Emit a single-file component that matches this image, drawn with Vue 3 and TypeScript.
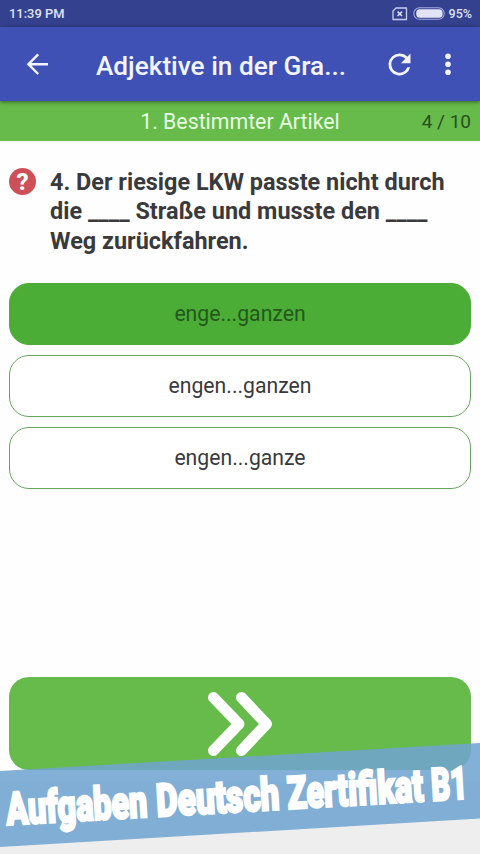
<script setup lang="ts">
import { onMounted, ref } from 'vue'

interface Answer {
  id: number
  label: string
}

interface BannerWord {
  text: string
  x: number
  width: number
  scale: number
}

const answers: Answer[] = [
  { id: 0, label: 'enge...ganzen' },
  { id: 1, label: 'engen...ganzen' },
  { id: 2, label: 'engen...ganze' },
]
const selected = ref<number>(0)

const words = ref<BannerWord[]>([
  { text: 'Aufgaben', x: 7, width: 141, scale: 0.7 },
  { text: 'Deutsch', x: 157, width: 123, scale: 0.7 },
  { text: 'Zertifikat', x: 288, width: 136, scale: 0.7 },
  { text: 'B1', x: 432, width: 36, scale: 0.65 },
])
const wordElements = ref<SVGTextElement[]>([])

// Condense every banner word to its own column width.
onMounted(() => {
  wordElements.value.forEach((element, index) => {
    const word = words.value[index]
    word.scale = word.width / element.getComputedTextLength()
  })
})
</script>

<template>
  <div class="screen">
    <div class="status">
      <span class="time">11:39 PM</span>
      <svg class="sim" width="16" height="14" viewBox="0 0 16 14">
        <path d="M4 1H14.5V12.5H1V4Z" fill="none" stroke="#c9cdf0" stroke-width="1.3" stroke-linejoin="round" />
        <path d="M5.6 4.6L10 9M10 4.6L5.6 9" stroke="#dfe1fa" stroke-width="1.5" />
      </svg>
      <svg class="battery" width="32" height="13" viewBox="0 0 32 13">
        <rect x=".8" y=".8" width="30.4" height="11.4" rx="5.7" fill="none" stroke="#a3aadd" stroke-width="1.1" />
        <rect x="3.2" y="2.3" width="26.4" height="8.4" rx="3.6" fill="#e2e3f7" />
      </svg>
      <span class="percent">95%</span>
    </div>

    <header class="toolbar">
      <button class="icon-button back" aria-label="Zurück">
        <svg width="24" height="24" viewBox="0 0 24 24">
          <path d="M23 12.2H3.5M13.2 2.4L3.4 12.2l9.8 9.8" fill="none" stroke="#f2f4ff" stroke-width="2.4" />
        </svg>
      </button>
      <h1>Adjektive in der Gra...</h1>
      <button class="icon-button refresh" aria-label="Neu laden">
        <svg width="33" height="33" viewBox="0 0 24 24">
          <path fill="#f2f4ff" d="M17.65 6.35A7.96 7.96 0 0 0 12 4a8 8 0 1 0 7.73 10h-2.08A6 6 0 1 1 12 6c1.66 0 3.14.69 4.22 1.78L13 11h7V4z" />
        </svg>
      </button>
      <button class="icon-button more" aria-label="Menü">
        <svg width="8" height="24" viewBox="0 0 8 24">
          <circle cx="4" cy="4.2" r="2.8" fill="#f2f4ff" />
          <circle cx="4" cy="12.2" r="2.8" fill="#f2f4ff" />
          <circle cx="4" cy="20.2" r="2.8" fill="#f2f4ff" />
        </svg>
      </button>
    </header>

    <div class="chapter">
      <span>1. Bestimmter Artikel</span>
      <span class="count">4 / 10</span>
    </div>

    <main>
      <section class="question">
        <span class="help">?</span>
        <p>4. Der riesige LKW passte nicht durch<br />die ____ Straße und musste den ____<br />Weg zurückfahren.</p>
      </section>
      <div class="answers">
        <button
          v-for="answer in answers"
          :key="answer.id"
          class="answer"
          :class="{ selected: selected === answer.id }"
          @click="selected = answer.id"
        >{{ answer.label }}</button>
      </div>
      <button class="next" aria-label="Weiter">
        <svg width="72" height="70" viewBox="0 0 72 70">
          <path d="M9.5 8.5L35 35 9.5 61.5M37.5 8.5L62.5 35 37.5 61.5" fill="none" stroke="#fff" stroke-width="11" stroke-linecap="round" stroke-linejoin="round" />
        </svg>
      </button>
    </main>
    <div class="footer"></div>

    <svg class="banner" width="480" height="154" viewBox="0 700 480 154">
      <polygon points="0,771 480,743 480,818.5 0,847" fill="#70a4d1" fill-opacity=".87" />
      <g transform="matrix(1 -0.0575 0.0575 1 0 825.5)">
        <text
          v-for="word in words"
          :key="word.text"
          ref="wordElements"
          class="banner-word"
          :transform="`translate(${word.x} 0) scale(${word.scale} 1)`"
        >{{ word.text }}</text>
      </g>
    </svg>
  </div>
</template>

<style>
body {
  margin: 0;
}
</style>

<style scoped>
.screen {
  position: relative;
  display: flex;
  flex-direction: column;
  width: 480px;
  height: 854px;
  overflow: hidden;
  background: #fefefe;
  font-family: Roboto, sans-serif;
  color: #3a3a3c;
}
button {
  padding: 0;
  border: 0;
  background: none;
  font: inherit;
  color: inherit;
}
svg {
  display: block;
}
.status {
  display: flex;
  align-items: center;
  box-sizing: border-box;
  height: 27px;
  padding: 0 8px 0 9px;
  background: #34418f;
  color: #dfe1f8;
  font-size: 12.9px;
  font-weight: 500;
}
.time {
  flex: 1;
}
.sim {
  margin-right: 5px;
}
.battery {
  margin-right: 4px;
}
.percent {
  font-size: 12.5px;
}
.toolbar {
  position: relative;
  display: flex;
  align-items: center;
  height: 74px;
  background: #3f51b5;
  box-shadow: 0 1px 4px rgba(0, 0, 0, 0.5);
}
.back {
  margin-left: 25px;
}
h1 {
  width: 252px;
  margin: 3px 0 0 47px;
  color: #f2f4ff;
  font-size: 26.2px;
  line-height: 32px;
  font-weight: 500;
  white-space: nowrap;
}
.refresh {
  margin-left: 35px;
}
.more {
  margin-left: 28px;
}
.chapter {
  display: grid;
  grid-template-columns: 80px 1fr 80px;
  align-items: center;
  height: 40px;
  background: #66bb4a;
  color: #e8fbe1;
  font-size: 21.3px;
  text-align: center;
}
.chapter span:first-child {
  grid-column: 2;
}
.chapter .count {
  padding-right: 9px;
  color: #285020;
  font-size: 19px;
  text-align: right;
  white-space: nowrap;
}
main {
  display: flex;
  flex: 1;
  flex-direction: column;
  padding: 26px 9px 0;
}
.question {
  display: flex;
  height: 116px;
}
.help {
  flex: none;
  width: 27px;
  height: 27px;
  margin-top: 1px;
  border-radius: 50%;
  background: #cd5058;
  color: #fff;
  font-size: 24px;
  font-weight: 800;
  line-height: 28px;
  text-align: center;
}
.question p {
  margin: 1px 0 0 14px;
  font-size: 23.45px;
  font-weight: 700;
  line-height: 29.3px;
  white-space: nowrap;
}
.answers {
  display: flex;
  flex-direction: column;
  gap: 10px;
}
.answer {
  box-sizing: border-box;
  height: 62px;
  padding-bottom: 2px;
  border: 1.5px solid #66a85a;
  border-radius: 20px;
  background: #fff;
  font-size: 21.2px;
}
.answer.selected {
  border-color: #4bad35;
  background: #4bad35;
  color: #24581d;
}
.next {
  display: flex;
  justify-content: center;
  height: 93px;
  margin-top: auto;
  padding-top: 12px;
  box-sizing: border-box;
  border-radius: 20px;
  background: #66bb4a;
}
.footer {
  height: 84px;
  background: linear-gradient(#fefefe 12px, #eee 12px);
}
.banner {
  position: absolute;
  left: 0;
  bottom: 0;
}
.banner-word {
  fill: #fff;
  stroke: #fff;
  stroke-width: 2.4px;
  font-family: Roboto, sans-serif;
  font-size: 45.5px;
  font-weight: 900;
}
</style>
